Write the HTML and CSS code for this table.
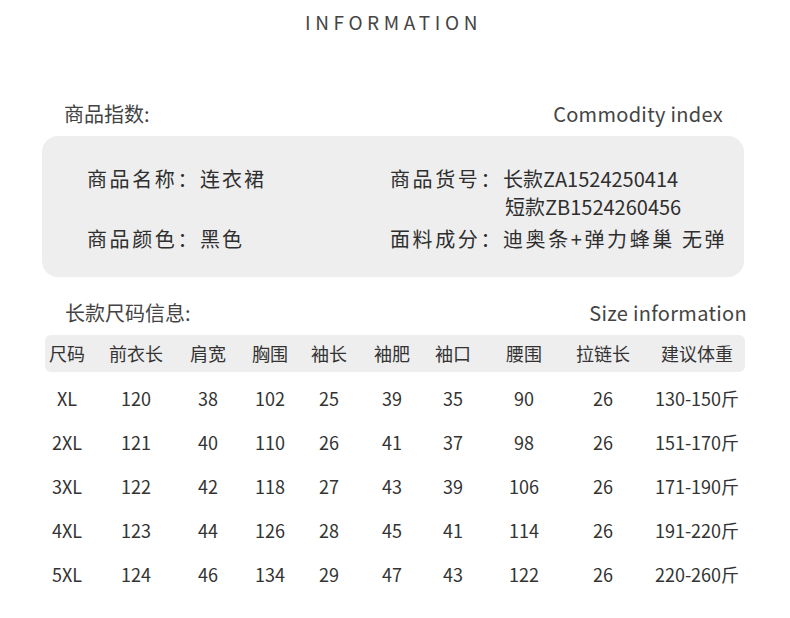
FILE: index.html
```html
<!DOCTYPE html>
<html lang="zh-CN">
<head>
<meta charset="utf-8">
<title>INFORMATION</title>
<link rel="stylesheet" href="styles.css">
</head>
<body>
<div class="page">
  <h1 class="title">INFORMATION</h1>

  <div class="sec-head sec-head--index">
    <span>商品指数:</span>
    <span class="en">Commodity index</span>
  </div>
  <div class="info-box">
    <div class="info-item"><span class="lbl">商品名称：</span><span class="val">连衣裙</span></div>
    <div class="info-item info-item--right">
      <span class="lbl">商品货号：</span>
      <span class="codes"><span>长款ZA1524250414</span><span class="code2">短款ZB1524260456</span></span>
    </div>
    <div class="info-item"><span class="lbl">商品颜色：</span><span class="val">黑色</span></div>
    <div class="info-item info-item--right"><span class="lbl">面料成分：</span><span class="val val--fabric">迪奥条+弹力蜂巢 无弹</span></div>
  </div>

  <div class="sec-head sec-head--size">
    <span>长款尺码信息:</span>
    <span class="en">Size information</span>
  </div>
  <div class="size-table">
    <div class="cols head">
      <span>尺码</span><span>前衣长</span><span>肩宽</span><span>胸围</span><span>袖长</span><span>袖肥</span><span>袖口</span><span>腰围</span><span>拉链长</span><span>建议体重</span>
    </div>
    <div class="cols row"><span>XL</span><span>120</span><span>38</span><span>102</span><span>25</span><span>39</span><span>35</span><span>90</span><span>26</span><span>130-150斤</span></div>
    <div class="cols row"><span>2XL</span><span>121</span><span>40</span><span>110</span><span>26</span><span>41</span><span>37</span><span>98</span><span>26</span><span>151-170斤</span></div>
    <div class="cols row"><span>3XL</span><span>122</span><span>42</span><span>118</span><span>27</span><span>43</span><span>39</span><span>106</span><span>26</span><span>171-190斤</span></div>
    <div class="cols row"><span>4XL</span><span>123</span><span>44</span><span>126</span><span>28</span><span>45</span><span>41</span><span>114</span><span>26</span><span>191-220斤</span></div>
    <div class="cols row"><span>5XL</span><span>124</span><span>46</span><span>134</span><span>29</span><span>47</span><span>43</span><span>122</span><span>26</span><span>220-260斤</span></div>
  </div>
</div>
</body>
</html>
```

FILE: styles.css
```css
* { box-sizing: border-box; }
html, body { margin: 0; padding: 0; background: #ffffff; }
body {
  font-family: "Noto Sans CJK SC", "Noto Sans", sans-serif;
  color: #3a3a3a;
  width: 790px;
  height: 618px;
  overflow: hidden;
}
.page { width: 790px; }

.title {
  margin: 10px 0 0 0;
  font-size: 19px;
  font-weight: 400;
  line-height: 24px;
  letter-spacing: 4.6px;
  text-align: center;
  padding-right: 3px;
  color: #444444;
}

.sec-head {
  display: flex;
  justify-content: space-between;
  font-size: 20px;
  line-height: 28px;
  color: #444444;
}
.sec-head .en { letter-spacing: 0.3px; }
.sec-head--index { margin-top: 66px; padding: 0 67px 0 64px; }
.sec-head--size { margin-top: 22px; padding: 0 43px 0 65px; }

.info-box {
  margin: 8px 46px 0 42px;
  background: #eeeeee;
  border-radius: 16px;
  padding: 29px 0 24px 45px;
  display: grid;
  grid-template-columns: 303px 1fr;
  grid-template-rows: 56px 28px;
  row-gap: 4px;
  font-size: 20px;
  line-height: 28px;
  color: #2e2e2e;
}
.info-item { display: flex; align-items: flex-start; }
.lbl { letter-spacing: 2.6px; white-space: nowrap; }
.val { letter-spacing: 2px; white-space: nowrap; }
.val--fabric { letter-spacing: 2.6px; }
.codes { display: flex; flex-direction: column; white-space: nowrap; }
.code2 { padding-left: 2px; }

.size-table { margin-top: 8px; }
.cols {
  display: grid;
  grid-template-columns: 44px 94px 50px 74px 44px 82px 40px 102px 56px 132px;
  margin-left: 45px;
  width: 700px;
  text-align: center;
  font-size: 18px;
  white-space: nowrap;
}
.cols > span { display: block; }
.head {
  background: #eeeeee;
  border-radius: 6px;
  height: 37px;
  line-height: 37px;
  color: #333333;
  margin-bottom: 4px;
}
.row {
  height: 44px;
  line-height: 44px;
  color: #333333;
}
```
